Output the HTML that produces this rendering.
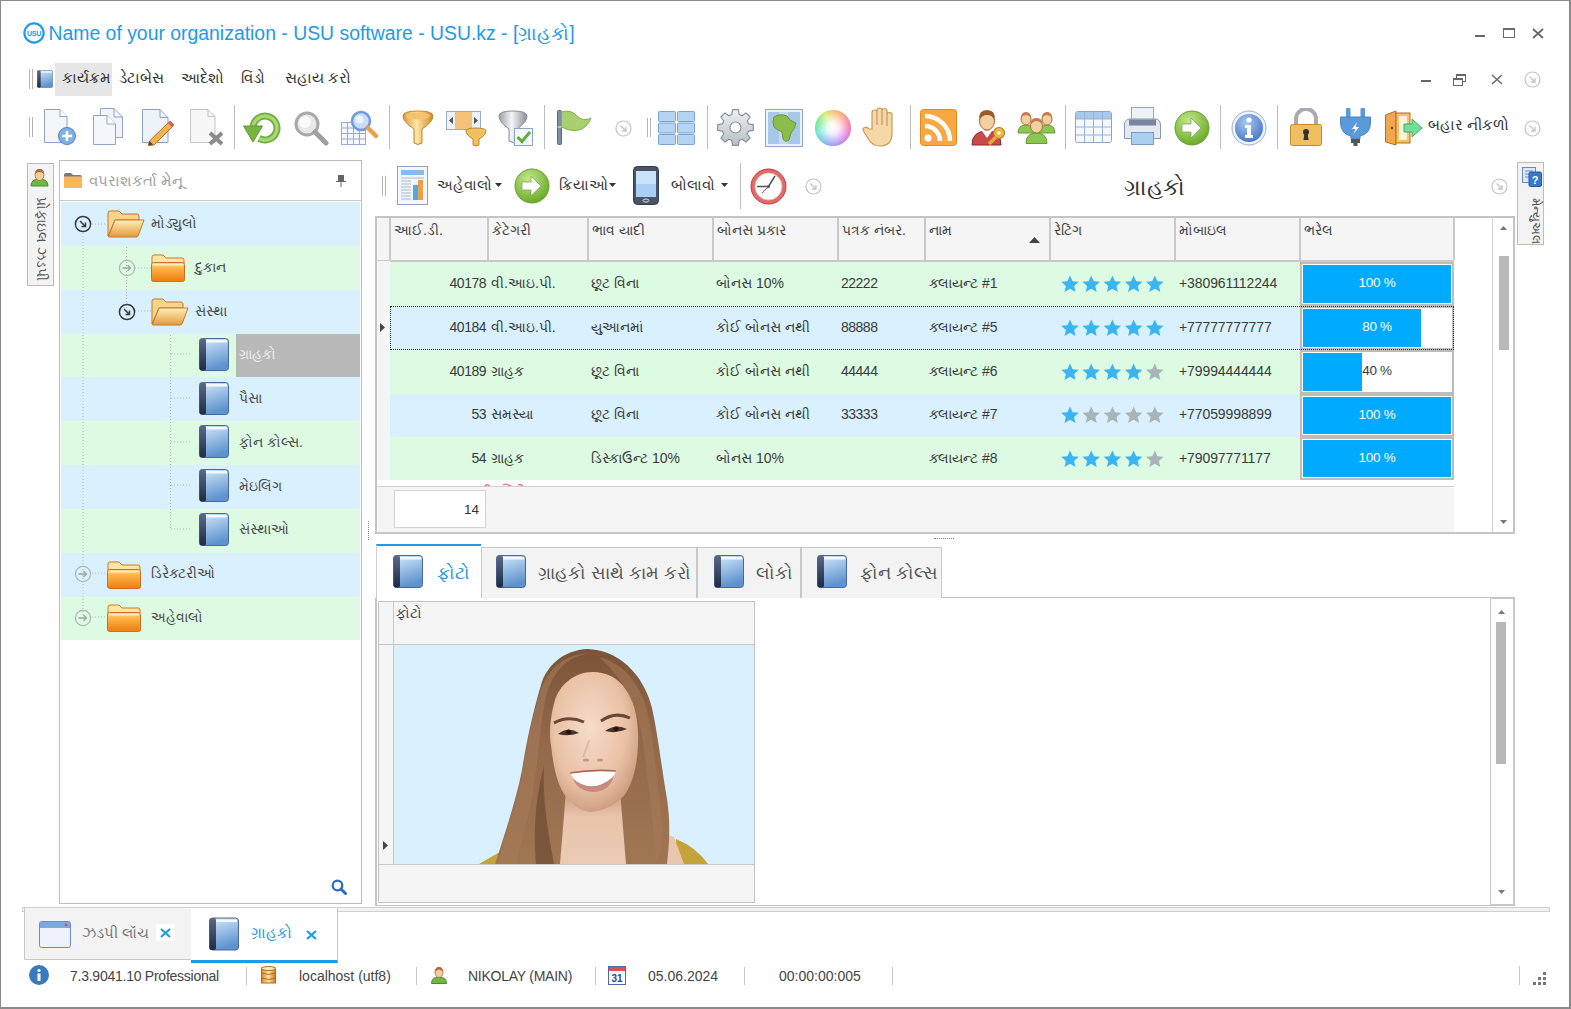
<!DOCTYPE html>
<html><head><meta charset="utf-8">
<style>
*{box-sizing:border-box;margin:0;padding:0}
html,body{width:1571px;height:1009px;overflow:hidden;background:#fff;font-family:"Liberation Sans",sans-serif;color:#3c3c3c}
.a{position:absolute}
.t{position:absolute;white-space:nowrap;line-height:1}
#win{position:absolute;left:0;top:0;width:1571px;height:1009px;border-style:solid;border-color:#8a8a8a;border-width:1px 2px 2px 1px}
.vs{position:absolute;width:1px;background:#bdbdbd}
.grip{position:absolute;width:4px;border-left:1px solid #b5b5b5;border-right:1px solid #b5b5b5}
.blue{background:#d9f1fe}
.green{background:#ddfbe3}
.gl{position:absolute;background:#c9c9c9}
</style></head><body>
<svg width="0" height="0" style="position:absolute">
<defs>
<linearGradient id="gBook" x1="0" y1="0" x2="0.3" y2="1"><stop offset="0" stop-color="#d6ebfb"/><stop offset="1" stop-color="#5f93cf"/></linearGradient>
<linearGradient id="gSpine" x1="0" y1="0" x2="0" y2="1"><stop offset="0" stop-color="#5a6a88"/><stop offset="1" stop-color="#1f2a44"/></linearGradient>
<symbol id="book" viewBox="0 0 30 33"><rect x="0.5" y="0.5" width="29" height="32" rx="3" fill="url(#gBook)" stroke="#49689a"/><rect x="0.5" y="0.5" width="6.5" height="32" rx="2" fill="url(#gSpine)"/><rect x="7" y="2" width="21" height="2.5" fill="#f4f8fc"/></symbol>
<linearGradient id="gFold" x1="0" y1="0" x2="0" y2="1"><stop offset="0" stop-color="#fff0b8"/><stop offset="1" stop-color="#e49a3c"/></linearGradient>
<linearGradient id="gFoldC" x1="0" y1="0" x2="0" y2="1"><stop offset="0" stop-color="#ffe08a"/><stop offset="0.3" stop-color="#ffb347"/><stop offset="1" stop-color="#ee7d10"/></linearGradient>
<symbol id="fopen" viewBox="0 0 38 28"><path d="M1 3 Q1 1 3 1 H12 L15 4 H30 Q32 4 32 6 V10 H8 L1 26 Z" fill="#f8d48a" stroke="#c07a2a" stroke-width="1"/><path d="M8 10 H37 L31 26 Q30.5 27 29 27 H2 Q1 27 1.5 26 Z" fill="url(#gFold)" stroke="#c07a2a" stroke-width="1"/></symbol>
<symbol id="fclose" viewBox="0 0 34 28"><path d="M1 3 Q1 1 3 1 H12 L15 4 H31 Q33 4 33 6 V9 H1 Z" fill="#ffe7a3" stroke="#c9782a"/><rect x="0.5" y="8.5" width="33" height="19" rx="2" fill="url(#gFoldC)" stroke="#c9702a"/><rect x="2" y="10" width="30" height="1.5" fill="#fff3c8" opacity="0.8"/></symbol>
<symbol id="circarrow" viewBox="0 0 17 17"><circle cx="8.5" cy="8.5" r="7.5" fill="none" stroke="#c4c4c4" stroke-width="1.2"/><path d="M5.5 5.5 L11 11 M7 11 H11 V7" fill="none" stroke="#c4c4c4" stroke-width="1.3"/></symbol>
</defs></svg>
<div id="win"></div>
<!-- TITLE -->
<svg class="a" style="left:23px;top:22px" width="22" height="22" viewBox="0 0 22 22"><circle cx="11" cy="11" r="9.6" fill="none" stroke="#1e9ae6" stroke-width="2.2"/><text x="11" y="13.6" font-size="7.2" font-weight="bold" text-anchor="middle" fill="#1e9ae6" font-family="Liberation Sans" letter-spacing="-0.4">USU</text></svg>
<div class="t" style="left:48.5px;top:24px;font-size:19.4px;color:#1e9ae6">Name of your organization - USU software - USU.kz - [ગ્રાહકો]</div>
<!-- window controls -->
<div class="a" style="left:1475px;top:35px;width:10px;height:2.4px;background:#6a6a6a"></div>
<div class="a" style="left:1503px;top:28px;width:12px;height:10px;border:1.3px solid #6a6a6a;border-top-width:2px"></div>
<svg class="a" style="left:1532px;top:28px" width="12" height="11"><path d="M1 1 L11 10 M11 1 L1 10" stroke="#6a6a6a" stroke-width="1.8"/></svg>
<!-- MENU -->
<div class="grip" style="left:29px;top:69px;height:20px"></div>
<svg class="a" style="left:37px;top:70px" width="16" height="18"><use href="#book" width="16" height="18"/></svg>
<div class="a" style="left:55px;top:63px;width:57px;height:33px;background:#e6e6e6"></div>
<div class="t" style="left:62px;top:70px;font-size:15px;color:#333">કાર્યક્રમ</div>
<div class="t" style="left:119px;top:70px;font-size:15px;color:#333">ડેટાબેસ</div>
<div class="t" style="left:181px;top:70px;font-size:15px;color:#333">આદેશો</div>
<div class="t" style="left:241px;top:70px;font-size:15px;color:#333">વિંડો</div>
<div class="t" style="left:285px;top:70px;font-size:15px;color:#333">સહાય કરો</div>
<!-- MDI controls -->
<div class="a" style="left:1421px;top:80px;width:10px;height:2px;background:#666"></div>
<svg class="a" style="left:1453px;top:74px" width="13" height="12"><rect x="3.5" y="0.5" width="9" height="7" fill="#fff" stroke="#666"/><rect x="0.5" y="4.5" width="9" height="7" fill="#fff" stroke="#666"/><rect x="0.5" y="4.5" width="9" height="1.5" fill="#666"/><rect x="3.5" y="0.5" width="9" height="1.5" fill="#666"/></svg>
<svg class="a" style="left:1491px;top:74px" width="12" height="11"><path d="M1 1 L11 10 M11 1 L1 10" stroke="#666" stroke-width="1.4"/></svg>
<svg class="a" style="left:1524px;top:71px" width="17" height="17"><use href="#circarrow"/></svg>
<!-- TOOLBAR -->
<div class="grip" style="left:29px;top:117px;height:20px"></div>
<!-- new doc -->
<svg class="a" style="left:43px;top:108px" width="34" height="38" viewBox="0 0 34 38"><path d="M1.5 1.5 H17 L24 8.5 V34.5 H1.5 Z" fill="#f3f6fb" stroke="#8fa3c9"/><path d="M17 1.5 V8.5 H24" fill="#fff" stroke="#8fa3c9"/><circle cx="24" cy="28" r="8.5" fill="#7fb0e8" stroke="#4e7fc0"/><path d="M24 23 V33 M19 28 H29" stroke="#fff" stroke-width="2.6"/></svg>
<!-- copy -->
<svg class="a" style="left:92px;top:107px" width="33" height="39" viewBox="0 0 33 39"><path d="M8.5 1.5 H22 L30.5 10 V30.5 H8.5 Z" fill="#f1f4fa" stroke="#8fa3c9"/><path d="M22 1.5 V10 H30.5" fill="none" stroke="#8fa3c9"/><path d="M1.5 8.5 H15 L23.5 17 V37.5 H1.5 Z" fill="#f4f7fb" stroke="#8fa3c9"/><path d="M15 8.5 V17 H23.5" fill="#fff" stroke="#8fa3c9"/></svg>
<!-- edit -->
<svg class="a" style="left:141px;top:108px" width="34" height="38" viewBox="0 0 34 38"><path d="M1.5 1.5 H19 L27 9.5 V34.5 H1.5 Z" fill="#eef2f9" stroke="#8fa3c9"/><path d="M19 1.5 V9.5 H27" fill="none" stroke="#8fa3c9"/><path d="M29 13 L33 17 L13 37 L7.5 37.5 L8.5 33 Z" fill="#f3b34a" stroke="#a8712a"/><path d="M29 13 L33 17 L31 19 L27 15 Z" fill="#e05a6a"/><path d="M8.5 33 L12 36.5 L7.5 37.5 Z" fill="#444"/></svg>
<!-- delete -->
<svg class="a" style="left:189px;top:108px" width="35" height="38" viewBox="0 0 35 38"><path d="M1.5 1.5 H19 L26 8.5 V34.5 H1.5 Z" fill="#f7f7f7" stroke="#c4c4c4"/><path d="M19 1.5 V8.5 H26" fill="none" stroke="#c4c4c4"/><path d="M21 25 L33 36 M33 25 L21 36" stroke="#8a8a8a" stroke-width="4"/></svg>
<div class="vs" style="left:234px;top:105px;height:44px"></div>
<!-- refresh -->
<svg class="a" style="left:243px;top:110px" width="39" height="34" viewBox="0 0 39 34"><path d="M16 28.4 A12 12 0 1 0 10 17" fill="none" stroke="#6fae3c" stroke-width="7"/><path d="M16 28.4 A12 12 0 1 0 10 17" fill="none" stroke="#a6d874" stroke-width="3.4"/><path d="M0.5 16 L19.5 16 L10 32 Z" fill="#76b540" stroke="#5d9a2e" stroke-width="1"/></svg>
<!-- search -->
<svg class="a" style="left:293px;top:110px" width="36" height="36" viewBox="0 0 36 36"><circle cx="14" cy="14" r="11" fill="#e8e8e8" stroke="#a8a8a8" stroke-width="3"/><circle cx="12" cy="12" r="6" fill="#fafafa"/><path d="M22 22 L33 33" stroke="#a0a0a0" stroke-width="5" stroke-linecap="round"/></svg>
<!-- search table -->
<svg class="a" style="left:340px;top:110px" width="39" height="36" viewBox="0 0 39 36"><g stroke="#9aaad0" fill="#f5f7fc"><rect x="1.5" y="12.5" width="24" height="22"/></g><path d="M1.5 18 H25.5 M1.5 23.5 H25.5 M1.5 29 H25.5 M7.5 12.5 V34.5 M13.5 12.5 V34.5 M19.5 12.5 V34.5" stroke="#9aaad0"/><circle cx="21" cy="11" r="9" fill="#c9dcf6" stroke="#6f9ad6" stroke-width="2.5"/><circle cx="19.5" cy="9.5" r="4" fill="#eef5ff"/><path d="M27.5 17.5 L36 26" stroke="#e8a14a" stroke-width="4.5" stroke-linecap="round"/></svg>
<div class="vs" style="left:389px;top:105px;height:44px"></div>
<!-- funnel -->
<svg class="a" style="left:402px;top:110px" width="32" height="36" viewBox="0 0 32 36"><defs><linearGradient id="gFun" x1="0" y1="0" x2="1" y2="0"><stop offset="0" stop-color="#d89a40"/><stop offset="0.45" stop-color="#ffe6a6"/><stop offset="1" stop-color="#d28a30"/></linearGradient></defs><path d="M1 6 Q1 1 16 1 Q31 1 31 6 Q31 12 20 19 V33 Q16 36 12 33 V19 Q1 12 1 6 Z" fill="url(#gFun)" stroke="#c4842e"/><ellipse cx="16" cy="6" rx="12" ry="3.5" fill="#f3c46a"/></svg>
<!-- column filter -->
<svg class="a" style="left:446px;top:111px" width="41" height="36" viewBox="0 0 41 36"><rect x="0.5" y="0.5" width="34" height="18" fill="#eef2fa" stroke="#9aaad0"/><rect x="9" y="1" width="17" height="17" fill="#f6c27a"/><path d="M3 9.5 L7 6 V13 Z M32 9.5 L28 6 V13 Z" fill="#555"/><path d="M20 20 Q20 17 30 17 Q40 17 40 20 Q40 24 33 28 V34 Q30 36 27 34 V28 Q20 24 20 20 Z" fill="#f0c060" stroke="#c4842e"/></svg>
<!-- filter check -->
<svg class="a" style="left:498px;top:110px" width="36" height="37" viewBox="0 0 36 37"><defs><linearGradient id="gFunG" x1="0" y1="0" x2="1" y2="0"><stop offset="0" stop-color="#9aa0a8"/><stop offset="0.45" stop-color="#f4f6f8"/><stop offset="1" stop-color="#8a9098"/></linearGradient></defs><path d="M1 6 Q1 1 15 1 Q29 1 29 6 Q29 12 19 19 V31 Q15 34 11 31 V19 Q1 12 1 6 Z" fill="url(#gFunG)" stroke="#8a9098"/><rect x="16.5" y="18.5" width="18" height="17" fill="#f4f6fb" stroke="#8fa3c9"/><path d="M19.5 27 L24 31.5 L32 22" fill="none" stroke="#5ab038" stroke-width="3"/></svg>
<div class="vs" style="left:544px;top:105px;height:44px"></div>
<!-- flag -->
<svg class="a" style="left:557px;top:110px" width="35" height="36" viewBox="0 0 35 36"><rect x="0.5" y="0.5" width="4" height="34" rx="1" fill="#7f8ea8" stroke="#5a6680"/><path d="M4.5 2 Q14 -1 20 6 Q26 12 34 8 Q30 18 22 20 Q14 22 4.5 17 Z" fill="#a8d070" stroke="#86b050"/><path d="M0.5 17 H4.5" stroke="#c8e070" stroke-width="1.5"/></svg>
<svg class="a" style="left:615px;top:120px" width="17" height="17"><use href="#circarrow"/></svg>
<div class="grip" style="left:647px;top:118px;height:19px"></div>
<!-- grid -->
<svg class="a" style="left:658px;top:111px" width="38" height="34" viewBox="0 0 38 34"><g fill="#b5d3f3" stroke="#7aa2d4"><rect x="0.5" y="0.5" width="17" height="10" rx="1"/><rect x="19.5" y="0.5" width="17" height="10" rx="1"/><rect x="0.5" y="12" width="17" height="10" rx="1"/><rect x="19.5" y="12" width="17" height="10" rx="1"/><rect x="0.5" y="23.5" width="17" height="10" rx="1"/><rect x="19.5" y="23.5" width="17" height="10" rx="1"/></g></svg>
<div class="vs" style="left:707px;top:105px;height:44px"></div>
<!-- gear -->
<svg class="a" style="left:716px;top:108px" width="39" height="39" viewBox="0 0 39 39"><defs><linearGradient id="gGear" x1="0" y1="0" x2="0" y2="1"><stop offset="0" stop-color="#eef0f3"/><stop offset="1" stop-color="#b8bec6"/></linearGradient></defs><path d="M15.8 6.5 L16.6 1.7 L22.4 1.7 L23.2 6.5 L26.0 7.7 L30.0 4.9 L34.1 9.0 L31.3 13.0 L32.5 15.8 L37.3 16.6 L37.3 22.4 L32.5 23.2 L31.3 26.0 L34.1 30.0 L30.0 34.1 L26.0 31.3 L23.2 32.5 L22.4 37.3 L16.6 37.3 L15.8 32.5 L13.0 31.3 L9.0 34.1 L4.9 30.0 L7.7 26.0 L6.5 23.2 L1.7 22.4 L1.7 16.6 L6.5 15.8 L7.7 13.0 L4.9 9.0 L9.0 4.9 L13.0 7.7 Z" fill="url(#gGear)" stroke="#8a9098" stroke-width="1.2" stroke-linejoin="round"/><circle cx="19.5" cy="19.5" r="5.5" fill="#fff" stroke="#8a9098" stroke-width="1.2"/></svg>
<!-- map -->
<svg class="a" style="left:765px;top:109px" width="38" height="38" viewBox="0 0 38 38"><rect x="0.5" y="0.5" width="37" height="37" fill="#eaf2fb" stroke="#8fa3c9"/><rect x="3" y="3" width="32" height="32" fill="#a8c8e8"/><rect x="14" y="3" width="9" height="32" fill="#c6daf0"/><path d="M9 8 Q15 4 22 7 L25 11 L31 14 Q30 20 26 24 L24 31 Q20 34 18 30 L17 23 Q12 21 9 18 Q7 13 9 8 Z" fill="#8cbc4c" stroke="#6a9a3a"/></svg>
<!-- color wheel -->
<div class="a" style="left:815px;top:110px;width:36px;height:36px;border-radius:50%;background:conic-gradient(#f8b040 0deg,#f86080 70deg,#e050d0 110deg,#a070f0 160deg,#60a0f0 210deg,#40e0d0 250deg,#50e070 290deg,#c0e850 330deg,#f8b040 360deg)"></div>
<div class="a" style="left:815px;top:110px;width:36px;height:36px;border-radius:50%;background:radial-gradient(circle,#fff 0,rgba(255,255,255,0.85) 25%,rgba(255,255,255,0.2) 70%,rgba(255,255,255,0) 100%)"></div>
<!-- hand -->
<svg class="a" style="left:862px;top:107px" width="37" height="40" viewBox="0 0 37 40"><path d="M10 22 V6 Q10 3 12.5 3 Q15 3 15 6 V18 V3.5 Q15 1 17.5 1 Q20 1 20 3.5 V18 V4 Q20 1.5 22.5 1.5 Q25 1.5 25 4 V19 V8 Q25 5.5 27.5 5.5 Q30 5.5 30 8 V26 Q30 39 18 39 Q11 39 7 33 L1.5 24 Q0 21.5 2.5 20.5 Q5 19.5 7 22 Z" fill="#f6d8a8" stroke="#c89a5a" stroke-width="1.2"/></svg>
<div class="vs" style="left:910px;top:105px;height:44px"></div>
<!-- rss -->
<svg class="a" style="left:920px;top:109px" width="37" height="37" viewBox="0 0 37 37"><rect x="0.5" y="0.5" width="36" height="36" rx="3" fill="#f8a840" stroke="#e08a20"/><circle cx="8" cy="29" r="3.5" fill="#fff"/><path d="M5 17 A15 15 0 0 1 20 32" fill="none" stroke="#fff" stroke-width="4.5"/><path d="M5 7 A25 25 0 0 1 30 32" fill="none" stroke="#fff" stroke-width="4.5"/></svg>
<!-- person key -->
<svg class="a" style="left:970px;top:107px" width="37" height="39" viewBox="0 0 37 39"><path d="M2 38 Q2 24 17 24 Q31 24 31 38 Z" fill="#c84a4a" stroke="#8a2a2a"/><path d="M12 24 L17 31 L22 24 Z" fill="#fff"/><ellipse cx="17" cy="14" rx="7.5" ry="9" fill="#f3cfa0" stroke="#a0703a"/><path d="M9.5 13 Q8 3 17 3 Q26 3 24.5 13 Q22 8 17 8 Q12 8 9.5 13 Z" fill="#9a5a2a"/><circle cx="29" cy="26" r="5.5" fill="#f0b840" stroke="#b07a20" stroke-width="1.2"/><path d="M26 30 L19 37" stroke="#e8a830" stroke-width="3.5"/><circle cx="29" cy="26" r="1.8" fill="#fff"/></svg>
<!-- group -->
<svg class="a" style="left:1017px;top:111px" width="39" height="33" viewBox="0 0 39 33"><g stroke="#6a9a3a"><path d="M1 22 Q1 14 9 14 Q17 14 17 22 Z" fill="#8cc850"/><path d="M22 22 Q22 14 30 14 Q38 14 38 22 Z" fill="#8cc850"/></g><ellipse cx="9" cy="8" rx="5" ry="6" fill="#f3cfa0" stroke="#a0703a"/><ellipse cx="30" cy="8" rx="5" ry="6" fill="#f3cfa0" stroke="#a0703a"/><path d="M4 7 Q4 1 9 1 Q14 1 14 7 Q12 4 9 4 Q6 4 4 7Z M25 7 Q25 1 30 1 Q35 1 35 7 Q33 4 30 4 Q27 4 25 7Z" fill="#c8784a"/><path d="M9 32.5 Q9 22 19.5 22 Q30 22 30 32.5 Z" fill="#8cc850" stroke="#6a9a3a"/><ellipse cx="19.5" cy="15" rx="6" ry="7" fill="#f3cfa0" stroke="#a0703a"/><path d="M13.5 14 Q13 7 19.5 7 Q26 7 25.5 14 Q23 10 19.5 10 Q16 10 13.5 14Z" fill="#c8784a"/></svg>
<div class="vs" style="left:1065px;top:105px;height:44px"></div>
<!-- table -->
<svg class="a" style="left:1075px;top:111px" width="37" height="32" viewBox="0 0 37 32"><rect x="0.5" y="0.5" width="36" height="31" rx="2" fill="#f5f8fd" stroke="#8fa3c9"/><rect x="1" y="1" width="35" height="7" fill="#a9c8ee"/><path d="M1 8 H36 M1 16 H36 M1 24 H36 M9.5 1 V31 M18.5 1 V31 M27.5 1 V31" stroke="#9ab2d8"/></svg>
<!-- printer -->
<svg class="a" style="left:1123px;top:107px" width="39" height="39" viewBox="0 0 39 39"><rect x="8.5" y="0.5" width="22" height="14" fill="#eef1f6" stroke="#9aa6bc"/><path d="M1.5 18 Q1.5 12 7 12 H32 Q37.5 12 37.5 18 V31.5 H1.5 Z" fill="#e4e8f0" stroke="#8a96ae"/><rect x="6" y="12.5" width="27" height="6" fill="#7a86a0"/><rect x="8.5" y="25.5" width="22" height="12" fill="#a8d0f0" stroke="#7a9ac0"/></svg>
<!-- green arrow -->
<svg class="a" style="left:1174px;top:110px" width="36" height="36" viewBox="0 0 36 36"><defs><radialGradient id="gG" cx="0.4" cy="0.3" r="0.7"><stop offset="0" stop-color="#c4e88a"/><stop offset="1" stop-color="#6aab2a"/></radialGradient></defs><circle cx="18" cy="18" r="17" fill="url(#gG)" stroke="#6aa032"/><path d="M8 14 H17 V8 L27 18 L17 28 V22 H8 Z" fill="#fff" stroke="#7aa85a" stroke-width="0.8"/></svg>
<div class="vs" style="left:1220px;top:105px;height:44px"></div>
<!-- info -->
<svg class="a" style="left:1231px;top:110px" width="36" height="36" viewBox="0 0 36 36"><defs><radialGradient id="gI" cx="0.4" cy="0.3" r="0.7"><stop offset="0" stop-color="#a8c8f0"/><stop offset="1" stop-color="#4a7ac8"/></radialGradient></defs><circle cx="18" cy="18" r="17" fill="#eef2fa" stroke="#a0b0d0"/><circle cx="18" cy="18" r="14" fill="url(#gI)"/><circle cx="18" cy="10" r="2.6" fill="#fff"/><path d="M14 15 H20 V25 H22 V28 H14 V25 H16 V18 H14 Z" fill="#fff"/></svg>
<div class="vs" style="left:1277px;top:105px;height:44px"></div>
<!-- lock -->
<svg class="a" style="left:1290px;top:108px" width="32" height="38" viewBox="0 0 32 38"><path d="M6 17 V11 A10 10 0 0 1 26 11 V17" fill="none" stroke="#a8acb2" stroke-width="4"/><rect x="0.5" y="16.5" width="31" height="21" rx="2" fill="#f0c060" stroke="#c08a30"/><circle cx="16" cy="24" r="3" fill="#333"/><path d="M14.5 24 L13.5 32 H18.5 L17.5 24 Z" fill="#333"/></svg>
<!-- plug -->
<svg class="a" style="left:1340px;top:108px" width="31" height="39" viewBox="0 0 31 39"><rect x="6" y="0" width="4.5" height="10" rx="1" fill="#5a9ad8"/><rect x="20.5" y="0" width="4.5" height="10" rx="1" fill="#5a9ad8"/><path d="M0.5 9 H30.5 V14 Q30.5 26 20 28 V31 H11 V28 Q0.5 26 0.5 14 Z" fill="#5a9ad8" stroke="#4a82c0"/><path d="M17 14 L12 21 H15.5 L13.5 26 L19 19 H15.5 Z" fill="#fff"/><rect x="11" y="31" width="9" height="4" fill="#555"/><rect x="13.5" y="35" width="4" height="3" fill="#555"/></svg>
<!-- door -->
<svg class="a" style="left:1384px;top:110px" width="39" height="36" viewBox="0 0 39 36"><path d="M1.5 5 L12 1 V35 L1.5 32 Z" fill="#f0a850" stroke="#b07020"/><rect x="12" y="3" width="14" height="30" fill="#f6c070" stroke="#b07020"/><rect x="15" y="6" width="8" height="24" fill="#fff3d8"/><path d="M20 14 H28 V9 L38 18 L28 27 V22 H20 Z" fill="#70e098" stroke="#40a868"/><circle cx="8" cy="18" r="1.2" fill="#704010"/></svg>
<div class="t" style="left:1428px;top:117px;font-size:15px;color:#333">બહાર નીકળો</div>
<svg class="a" style="left:1524px;top:120px" width="17" height="17"><use href="#circarrow"/></svg>
<!-- LEFT SIDE VERTICAL TAB -->
<div class="a" style="left:27px;top:163px;width:27px;height:123px;background:#f3f3f3;border:1px solid #bcbcbc"></div>
<svg class="a" style="left:30px;top:168px" width="19" height="19" viewBox="0 0 19 19"><path d="M1 18 Q1 11 9.5 11 Q18 11 18 18 Z" fill="#70b840" stroke="#4a8a2a"/><ellipse cx="9.5" cy="7" rx="4.5" ry="5.5" fill="#f3cfa0" stroke="#a0703a" stroke-width="0.8"/><path d="M5 6 Q5 1 9.5 1 Q14 1 14 6 Q12 4 9.5 4 Q7 4 5 6Z" fill="#b8683a"/></svg>
<div class="t" style="left:33px;top:197px;width:16px;height:85px;"><div style="position:absolute;left:16px;top:0;transform-origin:0 0;transform:rotate(90deg);font-size:14px;color:#555;white-space:nowrap">પ્રોફાઇલ ઝડપી</div></div>
<!-- LEFT PANEL -->
<div class="a" style="left:59px;top:160px;width:303px;height:744px;border:1px solid #bdbdbd;background:#fff"></div>
<div class="a" style="left:60px;top:200px;width:302px;height:1px;background:#c8c8c8"></div>
<svg class="a" style="left:64px;top:173px" width="18" height="15" viewBox="0 0 18 15"><path d="M0 2 Q0 0 2 0 H7 L9 2 H16 Q18 2 18 4 V15 H0 Z" fill="#7a7a7a"/><rect x="0" y="3.5" width="18" height="11.5" fill="#fbb65a"/></svg>
<div class="t" style="left:89px;top:173px;font-size:15px;color:#a0a0a0">વપરાશકર્તા મેનૂ</div>
<svg class="a" style="left:336px;top:174px" width="10" height="13" viewBox="0 0 10 13"><path d="M2 1 H8 V7 H10 V8 H5.5 V13 H4.5 V8 H0 V7 H2 Z" fill="#666"/></svg>
<!-- tree rows -->
<div class="a blue" style="left:61px;top:202px;width:299px;height:44px"></div>
<div class="a green" style="left:61px;top:246px;width:299px;height:44px"></div>
<div class="a blue" style="left:61px;top:290px;width:299px;height:44px"></div>
<div class="a green" style="left:61px;top:334px;width:299px;height:43px"></div>
<div class="a blue" style="left:61px;top:377px;width:299px;height:44px"></div>
<div class="a green" style="left:61px;top:421px;width:299px;height:44px"></div>
<div class="a blue" style="left:61px;top:465px;width:299px;height:44px"></div>
<div class="a green" style="left:61px;top:509px;width:299px;height:44px"></div>
<div class="a blue" style="left:61px;top:553px;width:299px;height:44px"></div>
<div class="a green" style="left:61px;top:597px;width:299px;height:43px"></div>
<div class="a" style="left:236px;top:334px;width:124px;height:43px;background:#b9b9b9"></div>
<!-- dotted tree lines -->
<svg class="a" style="left:61px;top:202px" width="300" height="440">
<g stroke="#b5b5b5" stroke-width="1" stroke-dasharray="1 2" fill="none">
<path d="M22 31 V415"/><path d="M31 22 H46"/>
<path d="M65.5 45 V110"/><path d="M74 66 H90"/><path d="M74 109 H90"/>
<path d="M109.5 133 V327"/><path d="M110 152 H131"/><path d="M110 196 H131"/><path d="M110 240 H131"/><path d="M110 283 H131"/><path d="M110 327 H131"/>
<path d="M31 371 H46"/><path d="M31 415 H46"/>
</g></svg>
<!-- expanders -->
<svg class="a" style="left:74px;top:215px" width="18" height="18" viewBox="0 0 18 18"><circle cx="9" cy="9" r="7.6" fill="#fff" fill-opacity="0" stroke="#3a3a3a" stroke-width="1.5"/><path d="M6 6 L11.5 11.5 M7.5 11.5 H11.5 V7.5" fill="none" stroke="#3a3a3a" stroke-width="1.5"/></svg>
<svg class="a" style="left:118px;top:259px" width="18" height="18" viewBox="0 0 18 18"><circle cx="9" cy="9" r="7.6" fill="none" stroke="#b0b8b0" stroke-width="1.3"/><path d="M4.5 9 H12.5 M9.5 6 L12.5 9 L9.5 12" fill="none" stroke="#a0a8a0" stroke-width="1.3"/></svg>
<svg class="a" style="left:118px;top:303px" width="18" height="18" viewBox="0 0 18 18"><circle cx="9" cy="9" r="7.6" fill="none" stroke="#3a3a3a" stroke-width="1.5"/><path d="M6 6 L11.5 11.5 M7.5 11.5 H11.5 V7.5" fill="none" stroke="#3a3a3a" stroke-width="1.5"/></svg>
<svg class="a" style="left:74px;top:565px" width="18" height="18" viewBox="0 0 18 18"><circle cx="9" cy="9" r="7.6" fill="none" stroke="#b0b8b0" stroke-width="1.3"/><path d="M4.5 9 H12.5 M9.5 6 L12.5 9 L9.5 12" fill="none" stroke="#a0a8a0" stroke-width="1.3"/></svg>
<svg class="a" style="left:74px;top:609px" width="18" height="18" viewBox="0 0 18 18"><circle cx="9" cy="9" r="7.6" fill="none" stroke="#b0b8b0" stroke-width="1.3"/><path d="M4.5 9 H12.5 M9.5 6 L12.5 9 L9.5 12" fill="none" stroke="#a0a8a0" stroke-width="1.3"/></svg>
<!-- folders -->
<svg class="a" style="left:107px;top:210px" width="38" height="28"><use href="#fopen"/></svg>
<svg class="a" style="left:151px;top:254px" width="34" height="28"><use href="#fclose"/></svg>
<svg class="a" style="left:151px;top:298px" width="38" height="28"><use href="#fopen"/></svg>
<svg class="a" style="left:107px;top:561px" width="34" height="28"><use href="#fclose"/></svg>
<svg class="a" style="left:107px;top:604px" width="34" height="28"><use href="#fclose"/></svg>
<!-- books -->
<svg class="a" style="left:199px;top:338px" width="30" height="33"><use href="#book"/></svg>
<svg class="a" style="left:199px;top:382px" width="30" height="33"><use href="#book"/></svg>
<svg class="a" style="left:199px;top:425px" width="30" height="33"><use href="#book"/></svg>
<svg class="a" style="left:199px;top:469px" width="30" height="33"><use href="#book"/></svg>
<svg class="a" style="left:199px;top:513px" width="30" height="33"><use href="#book"/></svg>
<!-- tree text -->
<div class="t" style="left:151px;top:216px;font-size:14px;color:#4a4a4a">મોડ્યુલો</div>
<div class="t" style="left:195px;top:260px;font-size:14px;color:#4a4a4a">દુકાન</div>
<div class="t" style="left:195px;top:304px;font-size:14px;color:#4a4a4a">સંસ્થા</div>
<div class="t" style="left:239px;top:347px;font-size:14px;color:#ececec">ગ્રાહકો</div>
<div class="t" style="left:239px;top:391px;font-size:14px;color:#4a4a4a">પૈસા</div>
<div class="t" style="left:239px;top:435px;font-size:14px;color:#4a4a4a">ફોન કોલ્સ.</div>
<div class="t" style="left:239px;top:479px;font-size:14px;color:#4a4a4a">મેઇલિંગ</div>
<div class="t" style="left:239px;top:522px;font-size:14px;color:#4a4a4a">સંસ્થાઓ</div>
<div class="t" style="left:151px;top:566px;font-size:14px;color:#4a4a4a">ડિરેક્ટરીઓ</div>
<div class="t" style="left:151px;top:610px;font-size:14px;color:#4a4a4a">અહેવાલો</div>
<!-- search -->
<svg class="a" style="left:331px;top:879px" width="16" height="16" viewBox="0 0 16 16"><circle cx="6.5" cy="6.5" r="4.8" fill="none" stroke="#2a6ac0" stroke-width="2.2"/><path d="M10 10 L14.5 14.5" stroke="#2a6ac0" stroke-width="3" stroke-linecap="round"/></svg>
<!-- RIGHT TOP TOOLBAR -->
<div class="grip" style="left:382px;top:176px;height:20px"></div>
<svg class="a" style="left:397px;top:166px" width="31" height="39" viewBox="0 0 31 39"><rect x="0.5" y="0.5" width="30" height="38" fill="#f3f6fb" stroke="#8fa3c9"/><rect x="4" y="4" width="23" height="5" fill="#8ab8e8"/><path d="M4 12 H27 M4 15 H14 M4 18 H14 M4 21 H14 M4 24 H14 M4 27 H14 M4 30 H14 M4 33 H14" stroke="#a8b8d0"/><rect x="16" y="19" width="5" height="15" fill="#50a8e8"/><rect x="21" y="14" width="5" height="20" fill="#f0a040"/></svg>
<div class="t" style="left:437px;top:177px;font-size:15px;color:#3a3a3a">અહેવાલો</div>
<svg class="a" style="left:495px;top:183px" width="7" height="4"><path d="M0 0 H7 L3.5 4 Z" fill="#333"/></svg>
<svg class="a" style="left:514px;top:168px" width="36" height="36" viewBox="0 0 36 36"><circle cx="18" cy="18" r="17" fill="url(#gG)" stroke="#6aa032"/><path d="M8 14 H17 V8 L27 18 L17 28 V22 H8 Z" fill="#fff" stroke="#7aa85a" stroke-width="0.8"/></svg>
<div class="t" style="left:559px;top:177px;font-size:15px;color:#3a3a3a">ક્રિયાઓ</div>
<svg class="a" style="left:609px;top:183px" width="7" height="4"><path d="M0 0 H7 L3.5 4 Z" fill="#333"/></svg>
<svg class="a" style="left:633px;top:166px" width="26" height="39" viewBox="0 0 26 39"><rect x="0.5" y="0.5" width="25" height="38" rx="4" fill="#4a5468" stroke="#333c4c"/><rect x="3" y="5" width="20" height="26" fill="#a8d0f4"/><rect x="3" y="5" width="20" height="13" fill="#c8e2f8"/><ellipse cx="13" cy="34.5" rx="3" ry="1.5" fill="none" stroke="#ddd"/></svg>
<div class="t" style="left:671px;top:177px;font-size:15px;color:#3a3a3a">બોલાવો</div>
<svg class="a" style="left:721px;top:183px" width="7" height="4"><path d="M0 0 H7 L3.5 4 Z" fill="#333"/></svg>
<div class="vs" style="left:740px;top:163px;height:46px"></div>
<svg class="a" style="left:750px;top:168px" width="37" height="37" viewBox="0 0 37 37"><circle cx="18.5" cy="18.5" r="17.5" fill="#e86868" stroke="#b84040"/><circle cx="18.5" cy="18.5" r="13.5" fill="#fff" stroke="#c8c8c8"/><path d="M18.5 18.5 L25 8 M18.5 18.5 L7 18.5" stroke="#555" stroke-width="1.5"/><path d="M18.5 18.5 L12 25" stroke="#e04040" stroke-width="1"/><circle cx="18.5" cy="18.5" r="1.5" fill="#555"/></svg>
<svg class="a" style="left:805px;top:178px" width="17" height="17"><use href="#circarrow"/></svg>
<div class="t" style="left:1124px;top:176px;font-size:22.8px;color:#333">ગ્રાહકો</div>
<svg class="a" style="left:1491px;top:178px" width="17" height="17"><use href="#circarrow"/></svg>
<!-- RIGHT SIDE TAB -->
<div class="a" style="left:1517px;top:162px;width:27px;height:83px;background:#f3f3f3;border:1px solid #bcbcbc"></div>
<svg class="a" style="left:1522px;top:167px" width="20" height="20" viewBox="0 0 20 20"><rect x="0.5" y="0.5" width="13" height="15" fill="#dde8f6" stroke="#6a8ac0"/><path d="M3 4 H11 M3 7 H11 M3 10 H11" stroke="#6a8ac0"/><rect x="7" y="5" width="12.5" height="14.5" rx="1.5" fill="#3a78c8" stroke="#2a5aa0"/><text x="13.2" y="16.5" font-size="11" font-weight="bold" text-anchor="middle" fill="#fff" font-family="Liberation Sans">?</text></svg>
<div class="t" style="left:1527px;top:198px;width:15px;height:44px;"><div style="position:absolute;left:15px;top:0;transform-origin:0 0;transform:rotate(90deg);font-size:12px;color:#555;white-space:nowrap">મેન્યુઅલ</div></div>
<!-- GRID -->
<div class="a" style="left:375px;top:216px;width:1140px;height:318px;border:2px solid #c4c4c4;background:#fff"></div>
<div class="a" style="left:377px;top:218px;width:1077px;height:42px;background:#f5f5f5"></div>
<div class="gl" style="left:377px;top:259.5px;width:1077px;height:2px"></div>
<div class="a" style="left:377px;top:261px;width:13px;height:219px;background:#f5f5f5"></div>
<div class="t" style="left:394px;top:223px;font-size:14px;color:#444">આઈ.ડી.</div>
<div class="t" style="left:492px;top:223px;font-size:14px;color:#444">કેટેગરી</div>
<div class="t" style="left:592px;top:223px;font-size:14px;color:#444">ભાવ યાદી</div>
<div class="t" style="left:717px;top:223px;font-size:14px;color:#444">બોનસ પ્રકાર</div>
<div class="t" style="left:842px;top:223px;font-size:14px;color:#444">પત્રક નંબર.</div>
<div class="t" style="left:929px;top:223px;font-size:14px;color:#444">નામ</div>
<div class="t" style="left:1054px;top:223px;font-size:14px;color:#444">રેટિંગ</div>
<div class="t" style="left:1179px;top:223px;font-size:14px;color:#444">મોબાઇલ</div>
<div class="t" style="left:1304px;top:223px;font-size:14px;color:#444">ભરેલ</div>
<div class="gl" style="left:389px;top:218px;width:2px;height:42px"></div>
<div class="gl" style="left:487px;top:218px;width:2px;height:42px"></div>
<div class="gl" style="left:587px;top:218px;width:2px;height:42px"></div>
<div class="gl" style="left:712px;top:218px;width:2px;height:42px"></div>
<div class="gl" style="left:837px;top:218px;width:2px;height:42px"></div>
<div class="gl" style="left:924px;top:218px;width:2px;height:42px"></div>
<div class="gl" style="left:1049px;top:218px;width:2px;height:42px"></div>
<div class="gl" style="left:1174px;top:218px;width:2px;height:42px"></div>
<div class="gl" style="left:1299px;top:218px;width:2px;height:42px"></div>
<div class="gl" style="left:1453px;top:218px;width:2px;height:42px"></div>
<svg class="a" style="left:1029px;top:237px" width="11" height="6"><path d="M0 6 L5.5 0 L11 6 Z" fill="#444"/></svg>
<div class="a green" style="left:390px;top:261.5px;width:910px;height:44.5px"></div>
<div class="t" style="left:390px;top:275.75px;width:96px;text-align:right;font-size:14px;color:#3a3a3a;letter-spacing:-0.5px">40178</div>
<div class="t" style="left:491px;top:275.75px;font-size:14px;color:#3a3a3a">વી.આઇ.પી.</div>
<div class="t" style="left:591px;top:275.75px;font-size:14px;color:#3a3a3a">છૂટ વિના</div>
<div class="t" style="left:716px;top:275.75px;font-size:14px;color:#3a3a3a">બોનસ 10%</div>
<div class="t" style="left:841px;top:275.75px;font-size:14px;color:#3a3a3a;letter-spacing:-0.5px">22222</div>
<div class="t" style="left:929px;top:275.75px;font-size:14px;color:#3a3a3a">ક્લાયન્ટ #1</div>
<svg class="a" style="left:1061px;top:274.75px" width="106" height="18" viewBox="0 0 106 18"><path transform="translate(0.0 0)" d="M9 0.5 L11.6 6.3 L17.8 6.8 L13.1 10.9 L14.5 17 L9 13.8 L3.5 17 L4.9 10.9 L0.2 6.8 L6.4 6.3 Z" fill="#3ab4f2"/><path transform="translate(21.2 0)" d="M9 0.5 L11.6 6.3 L17.8 6.8 L13.1 10.9 L14.5 17 L9 13.8 L3.5 17 L4.9 10.9 L0.2 6.8 L6.4 6.3 Z" fill="#3ab4f2"/><path transform="translate(42.4 0)" d="M9 0.5 L11.6 6.3 L17.8 6.8 L13.1 10.9 L14.5 17 L9 13.8 L3.5 17 L4.9 10.9 L0.2 6.8 L6.4 6.3 Z" fill="#3ab4f2"/><path transform="translate(63.6 0)" d="M9 0.5 L11.6 6.3 L17.8 6.8 L13.1 10.9 L14.5 17 L9 13.8 L3.5 17 L4.9 10.9 L0.2 6.8 L6.4 6.3 Z" fill="#3ab4f2"/><path transform="translate(84.8 0)" d="M9 0.5 L11.6 6.3 L17.8 6.8 L13.1 10.9 L14.5 17 L9 13.8 L3.5 17 L4.9 10.9 L0.2 6.8 L6.4 6.3 Z" fill="#3ab4f2"/></svg>
<div class="t" style="left:1179px;top:275.75px;font-size:14px;color:#3a3a3a;letter-spacing:-0.1px">+380961112244</div>
<div class="a" style="left:1300px;top:261.5px;width:154px;height:44.5px;background:#fff;border:2px solid #bcbcbc"></div>
<div class="a" style="left:1303px;top:264.5px;width:148px;height:38.5px;background:#00aaff"></div>
<div class="t" style="left:1303px;top:276.25px;width:148px;text-align:center;font-size:13.5px;color:#fff;letter-spacing:-0.3px">100 %</div>
<div class="a blue" style="left:390px;top:306px;width:910px;height:43.5px"></div>
<div class="t" style="left:390px;top:319.75px;width:96px;text-align:right;font-size:14px;color:#3a3a3a;letter-spacing:-0.5px">40184</div>
<div class="t" style="left:491px;top:319.75px;font-size:14px;color:#3a3a3a">વી.આઇ.પી.</div>
<div class="t" style="left:591px;top:319.75px;font-size:14px;color:#3a3a3a">યુઆનમાં</div>
<div class="t" style="left:716px;top:319.75px;font-size:14px;color:#3a3a3a">કોઈ બોનસ નથી</div>
<div class="t" style="left:841px;top:319.75px;font-size:14px;color:#3a3a3a;letter-spacing:-0.5px">88888</div>
<div class="t" style="left:929px;top:319.75px;font-size:14px;color:#3a3a3a">ક્લાયન્ટ #5</div>
<svg class="a" style="left:1061px;top:318.75px" width="106" height="18" viewBox="0 0 106 18"><path transform="translate(0.0 0)" d="M9 0.5 L11.6 6.3 L17.8 6.8 L13.1 10.9 L14.5 17 L9 13.8 L3.5 17 L4.9 10.9 L0.2 6.8 L6.4 6.3 Z" fill="#3ab4f2"/><path transform="translate(21.2 0)" d="M9 0.5 L11.6 6.3 L17.8 6.8 L13.1 10.9 L14.5 17 L9 13.8 L3.5 17 L4.9 10.9 L0.2 6.8 L6.4 6.3 Z" fill="#3ab4f2"/><path transform="translate(42.4 0)" d="M9 0.5 L11.6 6.3 L17.8 6.8 L13.1 10.9 L14.5 17 L9 13.8 L3.5 17 L4.9 10.9 L0.2 6.8 L6.4 6.3 Z" fill="#3ab4f2"/><path transform="translate(63.6 0)" d="M9 0.5 L11.6 6.3 L17.8 6.8 L13.1 10.9 L14.5 17 L9 13.8 L3.5 17 L4.9 10.9 L0.2 6.8 L6.4 6.3 Z" fill="#3ab4f2"/><path transform="translate(84.8 0)" d="M9 0.5 L11.6 6.3 L17.8 6.8 L13.1 10.9 L14.5 17 L9 13.8 L3.5 17 L4.9 10.9 L0.2 6.8 L6.4 6.3 Z" fill="#3ab4f2"/></svg>
<div class="t" style="left:1179px;top:319.75px;font-size:14px;color:#3a3a3a;letter-spacing:-0.1px">+77777777777</div>
<div class="a" style="left:1300px;top:306px;width:154px;height:43.5px;background:#fff;border:2px solid #bcbcbc"></div>
<div class="a" style="left:1303px;top:309px;width:118px;height:37.5px;background:#00aaff"></div>
<div class="t" style="left:1303px;top:320.25px;width:148px;text-align:center;font-size:13.5px;color:#fff;letter-spacing:-0.3px">80 %</div>
<div class="a green" style="left:390px;top:349.5px;width:910px;height:44.0px"></div>
<div class="t" style="left:390px;top:363.5px;width:96px;text-align:right;font-size:14px;color:#3a3a3a;letter-spacing:-0.5px">40189</div>
<div class="t" style="left:491px;top:363.5px;font-size:14px;color:#3a3a3a">ગ્રાહક</div>
<div class="t" style="left:591px;top:363.5px;font-size:14px;color:#3a3a3a">છૂટ વિના</div>
<div class="t" style="left:716px;top:363.5px;font-size:14px;color:#3a3a3a">કોઈ બોનસ નથી</div>
<div class="t" style="left:841px;top:363.5px;font-size:14px;color:#3a3a3a;letter-spacing:-0.5px">44444</div>
<div class="t" style="left:929px;top:363.5px;font-size:14px;color:#3a3a3a">ક્લાયન્ટ #6</div>
<svg class="a" style="left:1061px;top:362.5px" width="106" height="18" viewBox="0 0 106 18"><path transform="translate(0.0 0)" d="M9 0.5 L11.6 6.3 L17.8 6.8 L13.1 10.9 L14.5 17 L9 13.8 L3.5 17 L4.9 10.9 L0.2 6.8 L6.4 6.3 Z" fill="#3ab4f2"/><path transform="translate(21.2 0)" d="M9 0.5 L11.6 6.3 L17.8 6.8 L13.1 10.9 L14.5 17 L9 13.8 L3.5 17 L4.9 10.9 L0.2 6.8 L6.4 6.3 Z" fill="#3ab4f2"/><path transform="translate(42.4 0)" d="M9 0.5 L11.6 6.3 L17.8 6.8 L13.1 10.9 L14.5 17 L9 13.8 L3.5 17 L4.9 10.9 L0.2 6.8 L6.4 6.3 Z" fill="#3ab4f2"/><path transform="translate(63.6 0)" d="M9 0.5 L11.6 6.3 L17.8 6.8 L13.1 10.9 L14.5 17 L9 13.8 L3.5 17 L4.9 10.9 L0.2 6.8 L6.4 6.3 Z" fill="#3ab4f2"/><path transform="translate(84.8 0)" d="M9 0.5 L11.6 6.3 L17.8 6.8 L13.1 10.9 L14.5 17 L9 13.8 L3.5 17 L4.9 10.9 L0.2 6.8 L6.4 6.3 Z" fill="#a8b4b8"/></svg>
<div class="t" style="left:1179px;top:363.5px;font-size:14px;color:#3a3a3a;letter-spacing:-0.1px">+79994444444</div>
<div class="a" style="left:1300px;top:349.5px;width:154px;height:44.0px;background:#fff;border:2px solid #bcbcbc"></div>
<div class="a" style="left:1303px;top:352.5px;width:59px;height:38.0px;background:#00aaff"></div>
<div class="t" style="left:1303px;top:364.0px;width:148px;text-align:center;font-size:13.5px;color:#3a3a3a;letter-spacing:-0.3px">40 %</div>
<div class="a blue" style="left:390px;top:393.5px;width:910px;height:43.5px"></div>
<div class="t" style="left:390px;top:407.25px;width:96px;text-align:right;font-size:14px;color:#3a3a3a;letter-spacing:-0.5px">53</div>
<div class="t" style="left:491px;top:407.25px;font-size:14px;color:#3a3a3a">સમસ્યા</div>
<div class="t" style="left:591px;top:407.25px;font-size:14px;color:#3a3a3a">છૂટ વિના</div>
<div class="t" style="left:716px;top:407.25px;font-size:14px;color:#3a3a3a">કોઈ બોનસ નથી</div>
<div class="t" style="left:841px;top:407.25px;font-size:14px;color:#3a3a3a;letter-spacing:-0.5px">33333</div>
<div class="t" style="left:929px;top:407.25px;font-size:14px;color:#3a3a3a">ક્લાયન્ટ #7</div>
<svg class="a" style="left:1061px;top:406.25px" width="106" height="18" viewBox="0 0 106 18"><path transform="translate(0.0 0)" d="M9 0.5 L11.6 6.3 L17.8 6.8 L13.1 10.9 L14.5 17 L9 13.8 L3.5 17 L4.9 10.9 L0.2 6.8 L6.4 6.3 Z" fill="#3ab4f2"/><path transform="translate(21.2 0)" d="M9 0.5 L11.6 6.3 L17.8 6.8 L13.1 10.9 L14.5 17 L9 13.8 L3.5 17 L4.9 10.9 L0.2 6.8 L6.4 6.3 Z" fill="#a8b4b8"/><path transform="translate(42.4 0)" d="M9 0.5 L11.6 6.3 L17.8 6.8 L13.1 10.9 L14.5 17 L9 13.8 L3.5 17 L4.9 10.9 L0.2 6.8 L6.4 6.3 Z" fill="#a8b4b8"/><path transform="translate(63.6 0)" d="M9 0.5 L11.6 6.3 L17.8 6.8 L13.1 10.9 L14.5 17 L9 13.8 L3.5 17 L4.9 10.9 L0.2 6.8 L6.4 6.3 Z" fill="#a8b4b8"/><path transform="translate(84.8 0)" d="M9 0.5 L11.6 6.3 L17.8 6.8 L13.1 10.9 L14.5 17 L9 13.8 L3.5 17 L4.9 10.9 L0.2 6.8 L6.4 6.3 Z" fill="#a8b4b8"/></svg>
<div class="t" style="left:1179px;top:407.25px;font-size:14px;color:#3a3a3a;letter-spacing:-0.1px">+77059998899</div>
<div class="a" style="left:1300px;top:393.5px;width:154px;height:43.5px;background:#fff;border:2px solid #bcbcbc"></div>
<div class="a" style="left:1303px;top:396.5px;width:148px;height:37.5px;background:#00aaff"></div>
<div class="t" style="left:1303px;top:407.75px;width:148px;text-align:center;font-size:13.5px;color:#fff;letter-spacing:-0.3px">100 %</div>
<div class="a green" style="left:390px;top:437px;width:910px;height:43px"></div>
<div class="t" style="left:390px;top:450.5px;width:96px;text-align:right;font-size:14px;color:#3a3a3a;letter-spacing:-0.5px">54</div>
<div class="t" style="left:491px;top:450.5px;font-size:14px;color:#3a3a3a">ગ્રાહક</div>
<div class="t" style="left:591px;top:450.5px;font-size:14px;color:#3a3a3a">ડિસ્કાઉન્ટ 10%</div>
<div class="t" style="left:716px;top:450.5px;font-size:14px;color:#3a3a3a">બોનસ 10%</div>
<div class="t" style="left:841px;top:450.5px;font-size:14px;color:#3a3a3a;letter-spacing:-0.5px"></div>
<div class="t" style="left:929px;top:450.5px;font-size:14px;color:#3a3a3a">ક્લાયન્ટ #8</div>
<svg class="a" style="left:1061px;top:449.5px" width="106" height="18" viewBox="0 0 106 18"><path transform="translate(0.0 0)" d="M9 0.5 L11.6 6.3 L17.8 6.8 L13.1 10.9 L14.5 17 L9 13.8 L3.5 17 L4.9 10.9 L0.2 6.8 L6.4 6.3 Z" fill="#3ab4f2"/><path transform="translate(21.2 0)" d="M9 0.5 L11.6 6.3 L17.8 6.8 L13.1 10.9 L14.5 17 L9 13.8 L3.5 17 L4.9 10.9 L0.2 6.8 L6.4 6.3 Z" fill="#3ab4f2"/><path transform="translate(42.4 0)" d="M9 0.5 L11.6 6.3 L17.8 6.8 L13.1 10.9 L14.5 17 L9 13.8 L3.5 17 L4.9 10.9 L0.2 6.8 L6.4 6.3 Z" fill="#3ab4f2"/><path transform="translate(63.6 0)" d="M9 0.5 L11.6 6.3 L17.8 6.8 L13.1 10.9 L14.5 17 L9 13.8 L3.5 17 L4.9 10.9 L0.2 6.8 L6.4 6.3 Z" fill="#3ab4f2"/><path transform="translate(84.8 0)" d="M9 0.5 L11.6 6.3 L17.8 6.8 L13.1 10.9 L14.5 17 L9 13.8 L3.5 17 L4.9 10.9 L0.2 6.8 L6.4 6.3 Z" fill="#a8b4b8"/></svg>
<div class="t" style="left:1179px;top:450.5px;font-size:14px;color:#3a3a3a;letter-spacing:-0.1px">+79097771177</div>
<div class="a" style="left:1300px;top:437px;width:154px;height:43px;background:#fff;border:2px solid #bcbcbc"></div>
<div class="a" style="left:1303px;top:440px;width:148px;height:37px;background:#00aaff"></div>
<div class="t" style="left:1303px;top:451.0px;width:148px;text-align:center;font-size:13.5px;color:#fff;letter-spacing:-0.3px">100 %</div>
<div class="a" style="left:390px;top:306px;width:1064px;height:44px;border:1px dotted #333"></div>
<svg class="a" style="left:380px;top:323px" width="5" height="9"><path d="M0 0 L5 4.5 L0 9 Z" fill="#444"/></svg>
<div class="a" style="left:390px;top:480px;width:1064px;height:6px;background:#fff"></div>
<svg class="a" style="left:482px;top:482px" width="42" height="5"><path d="M2.5 4.5 Q5 1 7.5 4.5 M21 3 Q24 1 27 3.5 L29 4 M36 3 Q39 1.5 41 4.5" fill="none" stroke="#f07070" stroke-width="1.3"/></svg>
<div class="a" style="left:377px;top:486px;width:1077px;height:46px;background:#f5f5f5;border-top:1.5px solid #d0d0d0"></div>
<div class="a" style="left:394px;top:490px;width:92px;height:38px;background:#fff;border:1px solid #d2d2d2"></div>
<div class="t" style="left:394px;top:503px;width:85px;text-align:right;font-size:13.5px;color:#333">14</div>
<div class="a" style="left:1492px;top:218px;width:1px;height:314px;background:#d4d4d4"></div>
<svg class="a" style="left:1500px;top:226px" width="7" height="4"><path d="M0 4 L3.5 0 L7 4 Z" fill="#777"/></svg>
<div class="a" style="left:1499px;top:256px;width:10px;height:94px;background:#b8b8b8"></div>
<svg class="a" style="left:1500px;top:520px" width="7" height="4"><path d="M0 0 L3.5 4 L7 0 Z" fill="#777"/></svg>
<div class="a" style="left:368px;top:521px;width:1px;height:19px;border-left:1px dotted #888"></div>
<div class="a" style="left:934px;top:538px;width:20px;height:1px;border-top:1px dotted #888"></div>
<!-- DETAIL TABS -->
<div class="a" style="left:376px;top:597px;width:1139px;height:1px;background:#c4c4c4"></div>
<div class="a" style="left:481px;top:547px;width:216px;height:51px;background:#f3f3f3;border:1px solid #c8c8c8;border-bottom:none"></div>
<div class="a" style="left:697px;top:547px;width:104px;height:51px;background:#f3f3f3;border:1px solid #c8c8c8;border-bottom:none"></div>
<div class="a" style="left:801px;top:547px;width:141px;height:51px;background:#f3f3f3;border:1px solid #c8c8c8;border-bottom:none"></div>
<div class="a" style="left:376px;top:544px;width:105px;height:55px;background:#fff;border-left:1px solid #d0d0d0;border-top:2px solid #1e9ae6"></div>
<svg class="a" style="left:393px;top:555px" width="30" height="33"><use href="#book"/></svg>
<svg class="a" style="left:496px;top:555px" width="30" height="33"><use href="#book"/></svg>
<svg class="a" style="left:714px;top:555px" width="30" height="33"><use href="#book"/></svg>
<svg class="a" style="left:817px;top:555px" width="30" height="33"><use href="#book"/></svg>
<div class="t" style="left:437px;top:564.5px;font-size:17.5px;color:#1e9ae6">ફોટો</div>
<div class="t" style="left:538px;top:564.5px;font-size:17.5px;color:#555">ગ્રાહકો સાથે કામ કરો</div>
<div class="t" style="left:756px;top:564.5px;font-size:17.5px;color:#555">લોકો</div>
<div class="t" style="left:860px;top:564.5px;font-size:17.5px;color:#555">ફોન કોલ્સ</div>
<!-- DETAIL PANEL -->
<div class="a" style="left:375px;top:598px;width:1.5px;height:308px;background:#c4c4c4"></div>
<div class="a" style="left:376px;top:905px;width:1139px;height:1px;background:#c4c4c4"></div>
<div class="a" style="left:378px;top:601px;width:377px;height:302px;border:1px solid #c4c4c4;background:#f5f5f5"></div>
<div class="a" style="left:393px;top:602px;width:1px;height:262px;background:#c8c8c8"></div>
<div class="a" style="left:379px;top:643.5px;width:375px;height:1.5px;background:#c4c4c4"></div>
<div class="a" style="left:379px;top:863.5px;width:375px;height:1px;background:#c8c8c8"></div>
<div class="t" style="left:396px;top:606px;font-size:14px;color:#444">ફોટો</div>
<svg class="a" style="left:383px;top:841px" width="5" height="9"><path d="M0 0 L5 4.5 L0 9 Z" fill="#444"/></svg>
<svg class="a" style="left:394px;top:645px" width="360" height="219" viewBox="0 0 360 219">
<defs>
<linearGradient id="gHair" x1="0" y1="0" x2="0" y2="1"><stop offset="0" stop-color="#7a5438"/><stop offset="0.4" stop-color="#93684a"/><stop offset="1" stop-color="#a07652"/></linearGradient>
<radialGradient id="gFace" cx="0.45" cy="0.4" r="0.65"><stop offset="0" stop-color="#f6dccb"/><stop offset="0.65" stop-color="#e9c0a4"/><stop offset="1" stop-color="#c8967a"/></radialGradient>
<linearGradient id="gNeck" x1="0" y1="0" x2="0" y2="1"><stop offset="0" stop-color="#c8987c"/><stop offset="0.35" stop-color="#e8c4aa"/><stop offset="1" stop-color="#eccbb4"/></linearGradient>
</defs>
<rect width="360" height="219" fill="#d9f1fe"/>
<path d="M85 219 L104 208 L122 219 Z" fill="#c3a33a"/>
<path d="M280 219 L282 194 Q302 202 314 219 Z" fill="#c3a33a"/>
<path d="M262 186 L280 192 L290 219 L256 219 Z" fill="#e9c6ae"/>
<path d="M194 4 C168 5 152 22 147 40 C138 70 132 100 128 125 C122 155 112 185 101 219 L273 219 C275 200 277 180 273 154 C268 125 264 90 258 63 C252 38 232 6 194 4 Z" fill="url(#gHair)"/>
<path d="M172 145 L226 145 C228 170 230 195 232 219 L166 219 C168 195 170 170 172 145 Z" fill="url(#gNeck)"/>
<path d="M199 27 C180 27 166 40 161 55 C156 72 155 90 157 100 C159 120 163 140 172 152 C180 162 190 167 197 167 C210 166 225 158 232 148 C240 135 244 115 244 97 C245 75 240 55 232 45 C225 33 212 27 199 27 Z" fill="url(#gFace)"/>
<path d="M199 8 C172 10 158 28 152 52 C146 80 145 110 140 140 C136 170 128 195 122 219 L104 219 C114 185 124 155 129 125 C134 95 140 65 148 42 C156 22 172 8 199 8 Z" fill="#a57a58" opacity="0.6"/>
<path d="M205 12 C230 18 248 40 254 70 C262 110 264 150 270 190 L262 219 C260 180 254 140 250 105 C246 70 236 40 205 12 Z" fill="#a57a58" opacity="0.55"/>
<path d="M150 120 C148 160 156 195 160 219 L142 219 C140 190 140 160 150 120 Z" fill="#5e3e2a" opacity="0.55"/>
<path d="M160 78 Q174 70 190 77" fill="none" stroke="#6a4834" stroke-width="3"/>
<path d="M207 76 Q221 66 236 73" fill="none" stroke="#6a4834" stroke-width="3"/>
<path d="M164 89 Q174 81 185 88 Q174 92 164 89 Z" fill="#4a3226"/><circle cx="174.5" cy="87" r="2.4" fill="#20140e"/>
<path d="M211 86 Q222 78 233 84 Q222 89 211 86 Z" fill="#4a3226"/><circle cx="222" cy="84" r="2.4" fill="#20140e"/>
<path d="M195 95 Q192 106 189 112" fill="none" stroke="#d8a890" stroke-width="2" opacity="0.6"/><ellipse cx="192" cy="115" rx="3" ry="1.6" fill="#b88068" opacity="0.7"/><ellipse cx="206" cy="115" rx="3" ry="1.6" fill="#b88068" opacity="0.7"/>
<path d="M176 128 Q199 123 222 126 Q216 141 199 143 Q183 141 176 128 Z" fill="#fff"/>
<path d="M176 128 Q199 124 222 126" fill="none" stroke="#a86a5a" stroke-width="1.6"/>
<path d="M179 134 Q199 150 220 131 Q215 147 199 147 Q184 146 179 134 Z" fill="#c88a7c"/>
</svg>
<!-- detail scrollbar -->
<div class="a" style="left:1490px;top:598px;width:25px;height:307px;border:1px solid #c8c8c8;border-right:2px solid #c8c8c8;background:#fff"></div>
<svg class="a" style="left:1498px;top:610px" width="7" height="4"><path d="M0 4 L3.5 0 L7 4 Z" fill="#777"/></svg>
<div class="a" style="left:1496px;top:622px;width:10px;height:142px;background:#b8b8b8"></div>
<svg class="a" style="left:1498px;top:890px" width="7" height="4"><path d="M0 0 L3.5 4 L7 0 Z" fill="#777"/></svg>
<!-- BOTTOM TABS -->
<div class="a" style="left:22px;top:907px;width:1528px;height:5px;background:#f2f2f2;border:1px solid #d0d0d0"></div>
<div class="a" style="left:24px;top:908px;width:168px;height:52px;background:#f3f3f3;border:1px solid #c8c8c8;border-top:none"></div>
<div class="a" style="left:191px;top:908px;width:147px;height:55px;background:#fff;border-right:1px solid #c8c8c8;border-bottom:3px solid #1e9ae6"></div>
<svg class="a" style="left:39px;top:921px" width="32" height="27" viewBox="0 0 32 27"><rect x="0.5" y="0.5" width="31" height="26" rx="2" fill="#eef2fa" stroke="#6a8ac0"/><rect x="1" y="1" width="30" height="6" fill="#7aa8e0"/><circle cx="27" cy="4" r="1.2" fill="#e04040"/></svg>
<div class="t" style="left:82px;top:925px;font-size:15px;color:#777">ઝડપી લૉંચ</div>
<div class="a" style="left:156px;top:924px;width:19px;height:17px;background:#fff"></div>
<svg class="a" style="left:160px;top:928px" width="11" height="10"><path d="M1 1 L10 9 M10 1 L1 9" stroke="#1e9ae6" stroke-width="2.2"/></svg>
<svg class="a" style="left:209px;top:917px" width="30" height="34"><use href="#book" width="30" height="34"/></svg>
<div class="t" style="left:251px;top:925px;font-size:15px;color:#1e9ae6">ગ્રાહકો</div>
<svg class="a" style="left:306px;top:930px" width="11" height="10"><path d="M1 1 L10 9 M10 1 L1 9" stroke="#1e9ae6" stroke-width="2.2"/></svg>
<!-- STATUS BAR -->
<svg class="a" style="left:29px;top:965px" width="20" height="20" viewBox="0 0 20 20"><circle cx="10" cy="10" r="10" fill="#3a78c0"/><circle cx="10" cy="5.5" r="1.6" fill="#fff"/><rect x="8.5" y="8.5" width="3" height="7.5" fill="#fff"/></svg>
<div class="t" style="left:70px;top:969px;font-size:14px;color:#444;letter-spacing:-0.25px">7.3.9041.10 Professional</div>
<div class="vs" style="left:246px;top:967px;height:18px;background:#c8c8c8"></div>
<svg class="a" style="left:261px;top:966px" width="15" height="19" viewBox="0 0 15 19"><defs><linearGradient id="gDb" x1="0" x2="1"><stop offset="0" stop-color="#d88a2a"/><stop offset="0.5" stop-color="#ffe0a0"/><stop offset="1" stop-color="#d08020"/></linearGradient></defs><rect x="0.5" y="2" width="14" height="15" fill="url(#gDb)" stroke="#b06a1a"/><ellipse cx="7.5" cy="2.5" rx="7" ry="2" fill="#ffe8b0" stroke="#b06a1a"/><path d="M0.5 7 Q7.5 10 14.5 7 M0.5 12 Q7.5 15 14.5 12" fill="none" stroke="#b06a1a"/></svg>
<div class="t" style="left:299px;top:969px;font-size:14px;color:#444">localhost (utf8)</div>
<div class="vs" style="left:416px;top:967px;height:18px;background:#c8c8c8"></div>
<svg class="a" style="left:431px;top:966px" width="16" height="18" viewBox="0 0 16 18"><path d="M0.5 17.5 Q0.5 11 8 11 Q15.5 11 15.5 17.5 Z" fill="#70b840" stroke="#4a8a2a"/><ellipse cx="8" cy="6.5" rx="4" ry="5" fill="#f3cfa0" stroke="#a0703a" stroke-width="0.8"/><path d="M4 6 Q4 1 8 1 Q12 1 12 6 Q10 3.5 8 3.5 Q6 3.5 4 6Z" fill="#b8683a"/></svg>
<div class="t" style="left:468px;top:969px;font-size:14px;color:#444;letter-spacing:-0.25px">NIKOLAY (MAIN)</div>
<div class="vs" style="left:595px;top:967px;height:18px;background:#c8c8c8"></div>
<svg class="a" style="left:608px;top:966px" width="18" height="19" viewBox="0 0 18 19"><rect x="0.5" y="0.5" width="17" height="18" fill="#fff" stroke="#4a6aa0"/><rect x="1" y="1" width="16" height="4" fill="#e05050"/><text x="9" y="16" font-size="10" font-weight="bold" text-anchor="middle" fill="#2a4a8a" font-family="Liberation Sans">31</text></svg>
<div class="t" style="left:648px;top:969px;font-size:14px;color:#444">05.06.2024</div>
<div class="vs" style="left:744px;top:967px;height:18px;background:#c8c8c8"></div>
<div class="t" style="left:779px;top:969px;font-size:14px;color:#444">00:00:00:005</div>
<div class="vs" style="left:892px;top:967px;height:18px;background:#c8c8c8"></div>
<div class="vs" style="left:1519px;top:966px;height:19px;background:#c8c8c8"></div>
<svg class="a" style="left:1533px;top:971px" width="14" height="14" viewBox="0 0 14 14"><g fill="#777"><rect x="10" y="1" width="3" height="3"/><rect x="5" y="6" width="3" height="3"/><rect x="10" y="6" width="3" height="3"/><rect x="0" y="11" width="3" height="3"/><rect x="5" y="11" width="3" height="3"/><rect x="10" y="11" width="3" height="3"/></g></svg>
</body></html>
